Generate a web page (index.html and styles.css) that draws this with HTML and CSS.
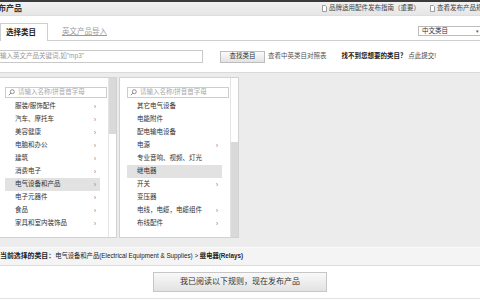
FILE: index.html
```html
<!DOCTYPE html>
<html lang="zh-CN">
<head>
<meta charset="utf-8">
<title>发布产品</title>
<link rel="stylesheet" href="styles.css">
</head>
<body>
<div class="topline"></div>
<div class="head">
  <div class="title">发布产品</div>
  <div class="head-links">
    <a class="hl"><svg class="doc" viewBox="0 0 5 7" width="5" height="7"><path d="M0.5 0.5H3.3L4.5 1.7V6.5H0.5Z" fill="#fff" stroke="#888" stroke-width="0.8"/></svg>品牌适用配件发布指南（重要）</a>
    <a class="hl second"><svg class="doc" viewBox="0 0 5 7" width="5" height="7"><path d="M0.5 0.5H3.3L4.5 1.7V6.5H0.5Z" fill="#fff" stroke="#888" stroke-width="0.8"/></svg>查看发布产品规则</a>
  </div>
</div>
<div class="tabs">
  <div class="tab active">选择类目</div>
  <a class="tab-link">英文产品导入</a>
  <div class="select"><span>中文类目</span><span class="caret">▾</span></div>
</div>
<div class="search-row">
  <div class="kw-input">输入英文产品关键词,如"mp3"</div>
  <div class="btn-find">查找类目</div>
  <a class="compare">查看中英类目对照表</a>
  <span class="notfound">找不到您想要的类目？ <a class="submit">点此提交!</a></span>
</div>
<div class="panel">
  <div class="col first">
    <div class="col-body">
      <div class="col-search"><svg viewBox="0 0 7 7" width="7" height="7"><circle cx="4.3" cy="2.7" r="2" fill="none" stroke="#777" stroke-width="0.8"/><path d="M2.9 4.1L0.8 6.2" stroke="#777" stroke-width="0.9"/></svg><span>请输入名称/拼音首字母</span></div>
      <ul class="list">
        <li><span>服装/服饰配件</span><i>›</i></li>
        <li><span>汽车、摩托车</span><i>›</i></li>
        <li><span>美容健康</span><i>›</i></li>
        <li><span>电脑和办公</span><i>›</i></li>
        <li><span>建筑</span><i>›</i></li>
        <li><span>消费电子</span><i>›</i></li>
        <li class="sel"><span>电气设备和产品</span><i>›</i></li>
        <li><span>电子元器件</span><i>›</i></li>
        <li><span>食品</span><i>›</i></li>
        <li><span>家具和室内装饰品</span><i>›</i></li>
      </ul>
    </div>
    <div class="scroll"><div class="thumb top"></div></div>
  </div>
  <div class="col">
    <div class="col-body">
      <div class="col-search"><svg viewBox="0 0 7 7" width="7" height="7"><circle cx="4.3" cy="2.7" r="2" fill="none" stroke="#777" stroke-width="0.8"/><path d="M2.9 4.1L0.8 6.2" stroke="#777" stroke-width="0.9"/></svg><span>请输入名称/拼音首字母</span></div>
      <ul class="list">
        <li><span>其它电气设备</span></li>
        <li><span>电能附件</span></li>
        <li><span>配电输电设备</span></li>
        <li><span>电源</span><i>›</i></li>
        <li><span>专业音响、视频、灯光</span></li>
        <li class="sel"><span>继电器</span></li>
        <li><span>开关</span><i>›</i></li>
        <li><span>变压器</span></li>
        <li><span>电线，电缆，电缆组件</span><i>›</i></li>
        <li><span>布线配件</span><i>›</i></li>
      </ul>
    </div>
    <div class="scroll"><div class="thumb bottom"></div></div>
  </div>
</div>
<div class="current">
  <b>当前选择的类目：</b><span class="path">电气设备和产品(Electrical Equipment &amp; Supplies) &gt; <b class="leaf">继电器(Relays)</b></span>
</div>
<div class="actions">
  <div class="btn-publish">我已阅读以下规则，现在发布产品</div>
</div>
</body>
</html>
```

FILE: styles.css
```css
html, body {
  margin: 0;
  padding: 0;
}
body {
  width: 480px;
  height: 300px;
  overflow: hidden;
  background: #fff;
  color: #333;
  font-family: "Liberation Sans", "Noto Sans CJK SC", sans-serif;
  font-size: 6.5px;
  line-height: 1;
}
a { color: inherit; text-decoration: none; }

.topline {
  height: 2px;
  background: #3c3c3c;
}

.head {
  height: 14px;
  display: flex;
  align-items: center;
  overflow: hidden;
  background: linear-gradient(#f2f2f2, #e6e6e6);
  border-bottom: 1px solid #dedede;
  box-sizing: border-box;
  white-space: nowrap;
}
.title {
  font-size: 8px;
  font-weight: bold;
  color: #333;
  margin-left: -10px;
  width: 332px;
  flex: none;
}
.head-links {
  display: flex;
  align-items: center;
  flex: none;
}
.hl {
  display: flex;
  align-items: center;
  gap: 2px;
  color: #444;
}
.hl.second { margin-left: 10px; }
.doc { flex: none; }

.tabs {
  height: 25px;
  display: flex;
  align-items: flex-end;
  border-bottom: 1px solid #cfcfcf;
  box-sizing: border-box;
}
.tab {
  height: 18px;
  margin-bottom: -1px;
  width: 48px;
  box-sizing: border-box;
  border: 1px solid #cfcfcf;
  border-bottom: none;
  background: #fff;
  font-size: 7.5px;
  font-weight: bold;
  color: #222;
  display: flex;
  align-items: center;
  padding-left: 5px;
}
.tab-link {
  margin-left: 14px;
  height: 18px;
  margin-bottom: -1px;
  display: flex;
  align-items: center;
  font-size: 7.5px;
  color: #9a9a9a;
  text-decoration: underline;
}
.select {
  align-self: flex-start;
  margin-top: 10px;
  margin-left: auto;
  width: 62px;
  height: 10px;
  box-sizing: border-box;
  border: 1px solid #bdbdbd;
  border-right: none;
  display: flex;
  align-items: center;
  justify-content: space-between;
  padding-left: 3px;
  color: #333;
  font-size: 6.5px;
}
.caret { font-size: 5px; color: #555; margin-right: 1px; }

.search-row {
  margin-top: 9px;
  height: 13px;
  display: flex;
  align-items: center;
  white-space: nowrap;
}
.kw-input {
  width: 203px;
  height: 13px;
  box-sizing: border-box;
  border: 1px solid #c9c9c9;
  border-left: none;
  display: flex;
  align-items: center;
  color: #999;
  font-size: 6.5px;
}
.btn-find {
  margin-left: 17px;
  width: 45px;
  height: 12px;
  box-sizing: border-box;
  border: 1px solid #bdbdbd;
  background: linear-gradient(#fbfbfb, #e3e3e3);
  display: flex;
  align-items: center;
  justify-content: center;
  color: #333;
}
.compare {
  margin-left: 3px;
  color: #555;
}
.notfound {
  margin-left: 15px;
  color: #222;
  font-weight: bold;
}
.submit { color: #444; font-weight: normal; }

.panel {
  margin-top: 9px;
  height: 175px;
  box-sizing: border-box;
  background: #ececec;
  border-top: 1px solid #dadada;
  padding-top: 4px;
  display: flex;
  align-items: flex-start;
  gap: 2px;
}
.col {
  width: 120px;
  height: 161px;
  box-sizing: border-box;
  background: #fff;
  border: 1px solid #d2d2d2;
  display: flex;
}
.col.first { margin-left: -3px; }
.col-body {
  flex: 1;
  padding-top: 9px;
  padding-left: 7px;
}
.col-search {
  width: 102px;
  height: 11px;
  box-sizing: border-box;
  border: 1px solid #cdcdcd;
  display: flex;
  align-items: center;
  gap: 3px;
  padding-left: 2px;
  color: #aaa;
}
.col-search svg { flex: none; }
.list {
  list-style: none;
  margin: 2px 0 0;
  padding: 0;
}
.list li {
  width: 95px;
  height: 13px;
  box-sizing: border-box;
  padding-left: 10px;
  padding-right: 4px;
  display: flex;
  align-items: center;
  justify-content: space-between;
  color: #333;
  white-space: nowrap;
}
.list li.sel { background: #e2e2e2; }
.list li i {
  font-style: normal;
  color: #888;
  font-size: 7px;
}
.scroll {
  width: 7px;
  flex: none;
  border-left: 1px solid #e4e4e4;
  display: flex;
  flex-direction: column;
}
.thumb { background: #d9d9d9; }
.thumb.top { height: 56px; }
.thumb.bottom { height: 95px; margin-top: auto; }

.current {
  height: 19px;
  box-sizing: border-box;
  border-top: 1px solid #fafafa;
  border-bottom: 1px solid #dedede;
  background: #f4f4f4;
  display: flex;
  align-items: center;
  white-space: nowrap;
  color: #222;
}
.current > b {
  font-size: 6.9px;
  font-weight: bold;
}
.path { font-size: 6.3px; }
.leaf { font-weight: bold; }

.actions {
  height: 33px;
  box-sizing: border-box;
  border-bottom: 1px solid #e2e2e2;
  display: flex;
  justify-content: center;
  padding-top: 6px;
}
.btn-publish {
  width: 174px;
  height: 20px;
  box-sizing: border-box;
  border: 1px solid #c6c6c6;
  background: linear-gradient(#f9f9f9, #e2e2e2);
  display: flex;
  align-items: center;
  justify-content: center;
  font-size: 8px;
  color: #333;
}
```
